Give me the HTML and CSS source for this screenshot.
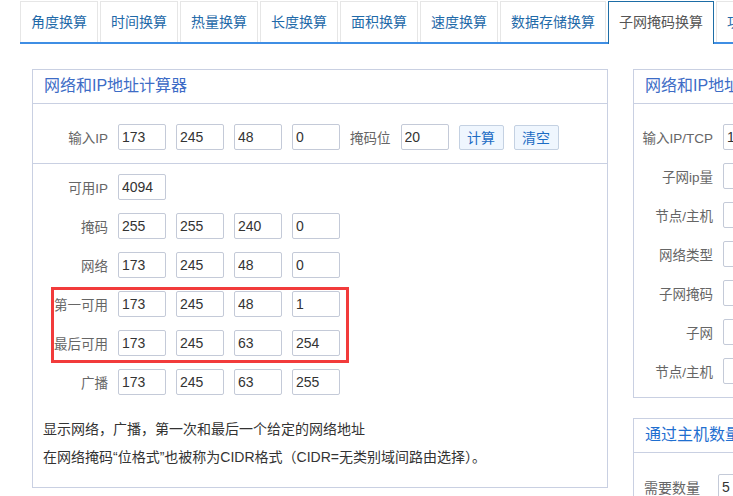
FILE: index.html
```html
<!DOCTYPE html>
<html lang="zh-CN">
<head>
<meta charset="utf-8">
<title>子网掩码换算</title>
<link rel="stylesheet" href="styles.css">
</head>
<body>
<div class="page">
  <nav class="tabs">
    <a class="tab">角度换算</a>
    <a class="tab">时间换算</a>
    <a class="tab">热量换算</a>
    <a class="tab">长度换算</a>
    <a class="tab">面积换算</a>
    <a class="tab">速度换算</a>
    <a class="tab">数据存储换算</a>
    <a class="tab active">子网掩码换算</a>
    <a class="tab">功率换算</a>
  </nav>

  <div class="main">
    <section class="panel panel-left">
      <div class="panel-head">网络和IP地址计算器</div>
      <div class="input-sec">
        <div class="row">
          <span class="lbl">输入IP</span>
          <input class="ip" value="173">
          <input class="ip" value="245">
          <input class="ip" value="48">
          <input class="ip" value="0">
          <span class="lbl-inline">掩码位</span>
          <input class="ip" value="20">
          <button class="btn">计算</button>
          <button class="btn">清空</button>
        </div>
      </div>
      <div class="result-sec">
        <div class="rows">
          <div class="row">
            <span class="lbl">可用IP</span>
            <input class="ip" value="4094">
          </div>
          <div class="row">
            <span class="lbl">掩码</span>
            <input class="ip" value="255">
            <input class="ip" value="255">
            <input class="ip" value="240">
            <input class="ip" value="0">
          </div>
          <div class="row">
            <span class="lbl">网络</span>
            <input class="ip" value="173">
            <input class="ip" value="245">
            <input class="ip" value="48">
            <input class="ip" value="0">
          </div>
          <div class="row">
            <span class="lbl">第一可用</span>
            <input class="ip" value="173">
            <input class="ip" value="245">
            <input class="ip" value="48">
            <input class="ip" value="1">
          </div>
          <div class="row">
            <span class="lbl">最后可用</span>
            <input class="ip" value="173">
            <input class="ip" value="245">
            <input class="ip" value="63">
            <input class="ip" value="254">
          </div>
          <div class="row">
            <span class="lbl">广播</span>
            <input class="ip" value="173">
            <input class="ip" value="245">
            <input class="ip" value="63">
            <input class="ip" value="255">
          </div>
        </div>
        <div class="highlight"></div>
        <div class="notes">
          <p>显示网络，广播，第一次和最后一个给定的网络地址</p>
          <p>在网络掩码“位格式”也被称为CIDR格式（CIDR=无类别域间路由选择）。</p>
        </div>
      </div>
    </section>

    <div class="side">
      <section class="panel panel-right">
        <div class="panel-head">网络和IP地址计算器</div>
        <div class="side-rows">
          <div class="row">
            <span class="lbl lbl-wide">输入IP/TCP</span>
            <input class="wide" value="173.245.48.0/20">
          </div>
          <div class="row">
            <span class="lbl lbl-wide">子网ip量</span>
            <input class="wide" value="">
          </div>
          <div class="row">
            <span class="lbl lbl-wide">节点/主机</span>
            <input class="wide" value="">
          </div>
          <div class="row">
            <span class="lbl lbl-wide">网络类型</span>
            <input class="wide" value="">
          </div>
          <div class="row">
            <span class="lbl lbl-wide">子网掩码</span>
            <input class="wide" value="">
          </div>
          <div class="row">
            <span class="lbl lbl-wide">子网</span>
            <input class="wide" value="">
          </div>
          <div class="row">
            <span class="lbl lbl-wide">节点/主机</span>
            <input class="wide" value="">
          </div>
        </div>
      </section>

      <section class="panel panel-right2">
        <div class="panel-head head-strong">通过主机数量计算子网</div>
        <div class="side-rows2">
          <div class="row">
            <span class="lbl lbl-left">需要数量</span>
            <input class="wide" value="5">
          </div>
        </div>
      </section>
    </div>
  </div>
</div>
</body>
</html>
```

FILE: styles.css
```css
html, body {
  margin: 0;
  padding: 0;
  overflow: hidden;
  background: #fff;
}

body {
  font-family: "Liberation Sans", "Noto Sans CJK SC", sans-serif;
  font-size: 14px;
  color: #333;
}

.page {
  width: 1100px;
}

/* Tabs */
.tabs {
  display: flex;
  gap: 2px;
  margin: 1px 0 0 20px;
  border-bottom: 2px solid #3f8ee4;
}

.tab {
  box-sizing: border-box;
  height: 41px;
  line-height: 40px;
  padding: 0 10px;
  border: 1px solid #e6e6e6;
  border-bottom: none;
  color: #1f6aa9;
  font-size: 14px;
  white-space: nowrap;
  background: #fff;
  cursor: pointer;
}

.tab.active {
  border-color: #1d6da6;
  color: #555;
  height: 43px;
  margin-bottom: -2px;
}

/* Layout */
.main {
  display: flex;
  align-items: flex-start;
  gap: 25px;
  margin: 25px 0 0 32px;
}

.panel {
  box-sizing: border-box;
  border: 1px solid #c9d0e2;
  background: #fff;
}

.panel-left {
  width: 576px;
  flex: none;
}

.side {
  width: 320px;
  flex: none;
  display: flex;
  flex-direction: column;
  gap: 20px;
}

.panel-head {
  height: 33px;
  line-height: 32px;
  padding-left: 11px;
  border-bottom: 1px solid #c9d0e2;
  color: #3d6cc6;
  font-size: 16px;
  white-space: nowrap;
}

.head-strong {
  color: #1f6fd0;
}

/* Rows and fields */
.row {
  display: flex;
  align-items: center;
  gap: 10px;
  height: 26px;
}

.lbl {
  width: 75px;
  flex: none;
  text-align: right;
  color: #666;
  font-size: 13.5px;
  white-space: nowrap;
}

.lbl-wide {
  width: 79px;
}

.lbl-left {
  width: 64px;
  padding-left: 10px;
  text-align: left;
  font-size: 14px;
}

.lbl-inline {
  color: #666;
  font-size: 13.5px;
  white-space: nowrap;
}

input {
  box-sizing: border-box;
  margin: 0;
  height: 26px;
  padding: 0 3px;
  border: 1px solid #c4cad8;
  border-radius: 2px;
  font-family: "Liberation Sans", sans-serif;
  font-size: 14px;
  color: #333;
  background: #fff;
  outline: none;
}

.ip {
  width: 48px;
  flex: none;
}

.wide {
  width: 180px;
  flex: none;
}

.btn {
  box-sizing: border-box;
  width: 45px;
  height: 25px;
  padding: 0;
  margin: 0;
  border: 1px solid #c4d1e2;
  border-radius: 2px;
  background: #eff6fe;
  color: #1c6cc4;
  font-family: "Noto Sans CJK SC", sans-serif;
  font-size: 14px;
  cursor: pointer;
}

/* Left panel sections */
.input-sec {
  padding: 20px 0 13px;
  border-bottom: 1px solid #c9d0e2;
}

.result-sec {
  position: relative;
  padding: 10px 0 16px;
}

.rows {
  display: flex;
  flex-direction: column;
  gap: 13px;
}

.highlight {
  position: absolute;
  left: 18px;
  top: 123px;
  width: 298px;
  height: 76px;
  box-sizing: border-box;
  border: 3px solid #f23b3b;
  pointer-events: none;
}

.notes {
  margin-top: 20px;
  padding-left: 10px;
  color: #333;
}

.notes p {
  margin: 0;
  line-height: 28px;
  white-space: nowrap;
}

/* Right panels */
.side-rows {
  display: flex;
  flex-direction: column;
  gap: 13px;
  padding: 20px 0 13px;
}

.side-rows2 {
  padding: 21px 0 20px;
}
```
